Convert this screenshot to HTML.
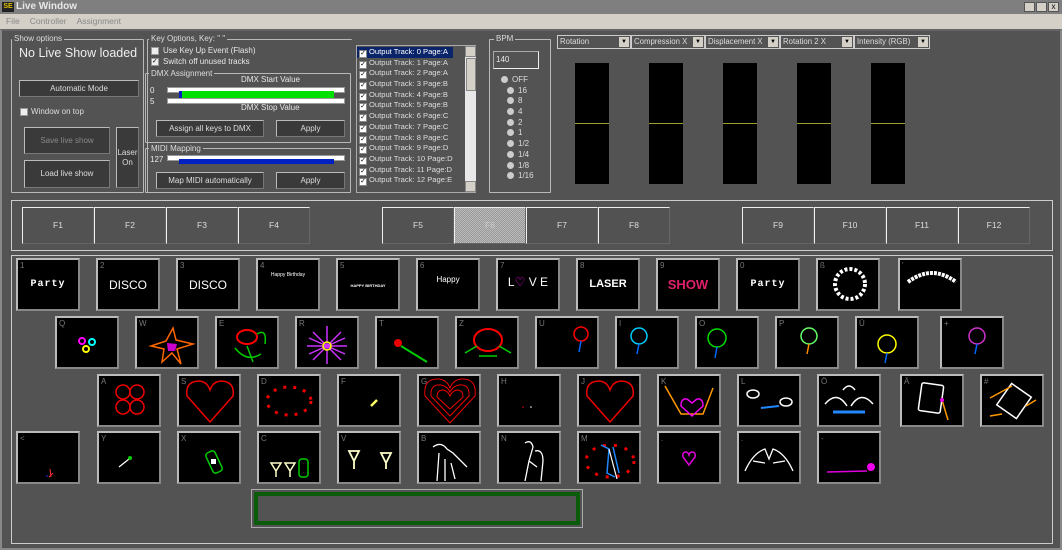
<!DOCTYPE html>
<html><head><meta charset="utf-8"><style>
*{box-sizing:border-box;margin:0;padding:0}
body{width:1062px;height:550px;background:#535353;font-family:"Liberation Sans",sans-serif;font-size:8px;color:#e8e8e8;position:relative;overflow:hidden}
.a{position:absolute}
.title{left:0;top:0;width:1062px;height:14px;background:#7f7f7f;color:#e8e8e8;font-weight:bold;font-size:10px;line-height:14px;padding-left:16px}
.menu{left:0;top:14px;width:1062px;height:15px;background:#d4d0c8;color:#888;font-size:8.5px;line-height:15px}
.grp{border:1px solid #b8b8b8;border-radius:1px}
.lbl{background:#535353;padding:0 2px;color:#ddd;font-size:8px;line-height:10px}
.btn{background:#3a3a3a;border:1px solid #777;border-top-color:#bbb;border-left-color:#bbb;color:#ddd;text-align:center;font-size:8px}
.chk{width:8px;height:8px;background:#eee;border:1px solid #999}
.meter{background:#000;width:34px;height:121px;top:63px}
.meter:after{content:"";position:absolute;left:0;top:60px;width:34px;height:1px;background:#a0a030}
.dd{top:35px;height:14px;border:1px solid #ccc;color:#ddd;line-height:12px;padding-left:2px;font-size:7.8px;white-space:nowrap;overflow:hidden}
.dd b{position:absolute;right:1px;top:1px;width:10px;height:10px;background:#d4d0c8;color:#000;font-size:6px;line-height:10px;text-align:center;font-weight:normal}
.fk{top:207px;height:37px;width:72px;background:#525252;border:1px solid #666;border-top-color:#eee;border-left-color:#eee;text-align:center;line-height:35px;color:#ddd;font-size:8.5px}
.th{width:64px;height:53px;background:#000;border:2px solid #bbb;border-right-color:#888;border-bottom-color:#888;overflow:hidden}
.th i{position:absolute;left:2px;top:1px;font-style:normal;color:#777;font-size:8px}
.th svg{position:absolute;left:0;top:0}
.tx{position:absolute;left:0;width:100%;text-align:center;color:#fff;font-weight:bold}
.trk{height:10.7px;line-height:10.7px;white-space:nowrap;font-size:7.6px;color:#ddd;padding-left:2px}
.trk span{display:inline-block;width:8px;height:8px;background:#fff;border:1px solid #888;vertical-align:-1px;margin-right:2px;color:#000;font-size:7px;line-height:6px;text-align:center}
.rad{font-size:8px;color:#ddd;height:10.7px;line-height:10.7px}
.rad span{display:inline-block;width:7px;height:7px;border-radius:50%;background:#ccc;margin-right:4px;vertical-align:-1px}
</style></head><body>
<div class="a title"><span class="a" style="left:2px;top:2px;width:12px;height:10px;background:#222;color:#e0c000;font-size:7px;line-height:10px;text-align:center">SE</span>Live Window</div>
<div class="a" style="right:3px;top:2px;display:flex;gap:1px"><div style="width:11px;height:10px;background:#d4d0c8;border:1px solid #555"></div><div style="width:11px;height:10px;background:#d4d0c8;border:1px solid #555"></div><div style="width:11px;height:10px;background:#d4d0c8;border:1px solid #555;font-size:8px;line-height:8px;text-align:center;color:#000">x</div></div>
<div class="a menu"><span style="margin-left:6px">File</span><span style="margin-left:10px">Controller</span><span style="margin-left:10px">Assignment</span></div>
<div class="a" style="left:0;top:29px;width:1062px;height:521px;border:2px solid #888;border-top-color:#666"></div>

<!-- Show options -->
<div class="a grp" style="left:11px;top:39px;width:133px;height:154px"></div>
<div class="a lbl" style="left:12px;top:34px">Show options</div>
<div class="a" style="left:19px;top:46px;font-size:12.5px;color:#eee">No Live Show loaded</div>
<div class="a btn" style="left:19px;top:80px;width:120px;height:17px;line-height:15px">Automatic Mode</div>
<div class="a chk" style="left:20px;top:108px"></div><div class="a" style="left:31px;top:107px;color:#ddd">Window on top</div>
<div class="a btn" style="left:24px;top:127px;width:86px;height:27px;line-height:25px;color:#888">Save live show</div>
<div class="a btn" style="left:24px;top:160px;width:86px;height:28px;line-height:26px">Load live show</div>
<div class="a btn" style="left:116px;top:127px;width:23px;height:61px;padding-top:20px;line-height:10px">Laser On</div>

<!-- Key options -->
<div class="a grp" style="left:147px;top:39px;width:205px;height:154px;border-bottom:none;border-right:none"></div>
<div class="a lbl" style="left:149px;top:34px">Key Options, Key: " "</div>
<div class="a chk" style="left:151px;top:47px"></div><div class="a" style="left:163px;top:46px">Use Key Up Event (Flash)</div>
<div class="a chk" style="left:151px;top:58px;font-size:7px;color:#000;line-height:6px">✓</div><div class="a" style="left:163px;top:57px">Switch off unused tracks</div>
<div class="a grp" style="left:145px;top:73px;width:206px;height:70px"></div>
<div class="a lbl" style="left:149px;top:69px">DMX Assignment</div>
<div class="a" style="left:241px;top:75px">DMX Start Value</div>
<div class="a" style="left:150px;top:86px">0</div><div class="a" style="left:150px;top:97px">5</div>
<div class="a" style="left:167px;top:87px;width:178px;height:6px;background:#fff;border:1px solid #999"></div>
<div class="a" style="left:180px;top:91px;width:154px;height:7px;background:#00e000"></div>
<div class="a" style="left:179px;top:91px;width:3px;height:7px;background:#0020c0"></div>
<div class="a" style="left:167px;top:98px;width:178px;height:6px;background:#fff;border:1px solid #999"></div>
<div class="a" style="left:241px;top:103px">DMX Stop Value</div>
<div class="a btn" style="left:156px;top:120px;width:108px;height:17px;line-height:15px">Assign all keys to DMX</div>
<div class="a btn" style="left:276px;top:120px;width:69px;height:17px;line-height:15px">Apply</div>
<div class="a grp" style="left:145px;top:148px;width:206px;height:45px"></div>
<div class="a lbl" style="left:149px;top:144px">MIDI Mapping</div>
<div class="a" style="left:150px;top:155px">127</div>
<div class="a" style="left:167px;top:155px;width:178px;height:6px;background:#fff;border:1px solid #999"></div>
<div class="a" style="left:179px;top:159px;width:155px;height:5px;background:#0020c0"></div>
<div class="a btn" style="left:156px;top:172px;width:108px;height:17px;line-height:15px">Map MIDI automatically</div>
<div class="a btn" style="left:276px;top:172px;width:69px;height:17px;line-height:15px">Apply</div>

<!-- Track list -->
<div class="a" style="left:356px;top:45px;width:120px;height:148px;border:1px solid #aaa;background:#535353;padding-top:1px;overflow:hidden">
<div class="trk" style="background:#0a246a;color:#fff;width:96px"><span>✓</span>Output Track: 0 Page:A</div>
<div class="trk"><span>✓</span>Output Track: 1 Page:A</div>
<div class="trk"><span>✓</span>Output Track: 2 Page:A</div>
<div class="trk"><span>✓</span>Output Track: 3 Page:B</div>
<div class="trk"><span>✓</span>Output Track: 4 Page:B</div>
<div class="trk"><span>✓</span>Output Track: 5 Page:B</div>
<div class="trk"><span>✓</span>Output Track: 6 Page:C</div>
<div class="trk"><span>✓</span>Output Track: 7 Page:C</div>
<div class="trk"><span>✓</span>Output Track: 8 Page:C</div>
<div class="trk"><span>✓</span>Output Track: 9 Page:D</div>
<div class="trk"><span>✓</span>Output Track: 10 Page:D</div>
<div class="trk"><span>✓</span>Output Track: 11 Page:D</div>
<div class="trk"><span>✓</span>Output Track: 12 Page:E</div>
</div>
<div class="a" style="left:465px;top:46px;width:11px;height:146px;background:#e8e8e8"></div>
<div class="a" style="left:465px;top:46px;width:11px;height:11px;background:#d4d0c8;border:1px solid #888"></div>
<div class="a" style="left:466px;top:58px;width:10px;height:33px;background:#d4d0c8;border:1px solid #888"></div>
<div class="a" style="left:465px;top:181px;width:11px;height:11px;background:#d4d0c8;border:1px solid #888"></div>

<!-- BPM -->
<div class="a grp" style="left:489px;top:39px;width:62px;height:154px;border-top:1px solid #bbb"></div>
<div class="a lbl" style="left:494px;top:34px">BPM</div>
<div class="a" style="left:493px;top:51px;width:46px;height:18px;border:1px solid #aaa;border-right-color:#eee;border-bottom-color:#eee;padding:3px 2px">140</div>
<div class="a" style="left:501px;top:75px">
<div class="rad"><span></span>OFF</div>
<div class="rad" style="padding-left:6px"><span></span>16</div>
<div class="rad" style="padding-left:6px"><span></span>8</div>
<div class="rad" style="padding-left:6px"><span></span>4</div>
<div class="rad" style="padding-left:6px"><span></span>2</div>
<div class="rad" style="padding-left:6px"><span></span>1</div>
<div class="rad" style="padding-left:6px"><span></span>1/2</div>
<div class="rad" style="padding-left:6px"><span></span>1/4</div>
<div class="rad" style="padding-left:6px"><span></span>1/8</div>
<div class="rad" style="padding-left:6px"><span></span>1/16</div>
</div>

<!-- dropdowns/meters -->
<div class="a dd" style="left:557px;width:74px">Rotation<b>▼</b></div>
<div class="a dd" style="left:631px;width:74px">Compression X<b>▼</b></div>
<div class="a dd" style="left:705px;width:75px">Displacement X<b>▼</b></div>
<div class="a dd" style="left:780px;width:74px">Rotation 2 X<b>▼</b></div>
<div class="a dd" style="left:854px;width:76px">Intensity (RGB)<b>▼</b></div>
<div class="a meter" style="left:575px"></div>
<div class="a meter" style="left:649px"></div>
<div class="a meter" style="left:723px"></div>
<div class="a meter" style="left:797px"></div>
<div class="a meter" style="left:871px"></div>

<!-- F keys -->
<div class="a" style="left:11px;top:200px;width:1042px;height:51px;border:1px solid #ccc"></div>
<div class="a fk" style="left:22px">F1</div><div class="a fk" style="left:94px">F2</div><div class="a fk" style="left:166px">F3</div><div class="a fk" style="left:238px">F4</div>
<div class="a fk" style="left:382px">F5</div>
<div class="a fk" style="left:454px;background:repeating-conic-gradient(#bbb 0 25%,#999 0 50%) 0 0/2px 2px;color:#ccc">F6</div>
<div class="a fk" style="left:526px">F7</div><div class="a fk" style="left:598px">F8</div>
<div class="a fk" style="left:742px">F9</div><div class="a fk" style="left:814px">F10</div><div class="a fk" style="left:886px">F11</div><div class="a fk" style="left:958px">F12</div>

<!-- thumbnails panel -->
<div class="a" style="left:11px;top:255px;width:1042px;height:289px;border:1px solid #ccc"></div>

<!-- row 1 -->
<div class="a th" style="left:16px;top:258px"><i>1</i><div class="tx" style="top:19px;font-size:10px;letter-spacing:1px;font-family:'Liberation Mono',monospace">Party</div></div>
<div class="a th" style="left:96px;top:258px"><i>2</i><div class="tx" style="top:18px;font-size:12px;font-weight:normal">DISCO</div></div>
<div class="a th" style="left:176px;top:258px"><i>3</i><div class="tx" style="top:18px;font-size:12px;font-weight:normal">DISCO</div></div>
<div class="a th" style="left:256px;top:258px"><i>4</i><div class="tx" style="top:12px;font-size:5px;font-weight:normal">Happy Birthday</div></div>
<div class="a th" style="left:336px;top:258px"><i>5</i><div class="tx" style="top:23px;font-size:4px">HAPPY BIRTHDAY</div></div>
<div class="a th" style="left:416px;top:258px"><i>6</i><div class="tx" style="top:15px;font-size:8px;font-weight:normal">Happy</div></div>
<div class="a th" style="left:496px;top:258px"><i>7</i><div class="tx" style="top:15px;font-size:12px;font-weight:normal">L<span style="color:#f0f">♡</span> V E</div></div>
<div class="a th" style="left:576px;top:258px"><i>8</i><div class="tx" style="top:18px;font-size:11px">LASER</div></div>
<div class="a th" style="left:656px;top:258px"><i>9</i><div class="tx" style="top:17px;font-size:13px;color:#e0206a">SHOW</div></div>
<div class="a th" style="left:736px;top:258px"><i>0</i><div class="tx" style="top:19px;font-size:10px;letter-spacing:1px;font-family:'Liberation Mono',monospace">Party</div></div>
<div class="a th" style="left:816px;top:258px"><i>ß</i><svg width="60" height="49"><circle cx="32" cy="24" r="15" fill="none" stroke="#fff" stroke-width="4" stroke-dasharray="3 2"/></svg></div>
<div class="a th" style="left:898px;top:258px"><i>'</i><svg width="60" height="49"><path d="M8 22 Q32 4 56 22" fill="none" stroke="#fff" stroke-width="4" stroke-dasharray="3 1"/></svg></div>

<!-- row 2 -->
<div class="a th" style="left:55px;top:316px"><i>Q</i><svg width="60" height="49"><circle cx="25" cy="23" r="3" fill="none" stroke="#f0f" stroke-width="2"/><circle cx="35" cy="24" r="3" fill="none" stroke="#0ff" stroke-width="2"/><circle cx="29" cy="31" r="3" fill="none" stroke="#ff0" stroke-width="2"/></svg></div>
<div class="a th" style="left:135px;top:316px"><i>W</i><svg width="60" height="49"><path d="M36 10 L39 22 L56 26 L40 31 L44 46 L35 35 L25 44 L27 31 L14 28 L29 23 Z" fill="none" stroke="#f60" stroke-width="1.5"/><path d="M30 25 L40 26 L38 33 L31 33Z" fill="#c0c"/></svg></div>
<div class="a th" style="left:215px;top:316px"><i>E</i><svg width="60" height="49"><ellipse cx="30" cy="19" rx="10" ry="7" fill="none" stroke="#f00" stroke-width="2"/><path d="M18 30 Q30 45 44 36 M40 16 Q50 10 48 26 M30 28 L36 44" fill="none" stroke="#0c0" stroke-width="1.5"/></svg></div>
<div class="a th" style="left:295px;top:316px"><i>R</i><svg width="60" height="49"><g stroke="#c3f" stroke-width="1.5"><path d="M10 28 L50 28 M30 8 L30 46 M16 14 L44 42 M44 14 L16 42 M12 20 L48 36 M12 36 L48 20"/></g><circle cx="30" cy="28" r="4" fill="none" stroke="#ff0" stroke-width="1.5"/></svg></div>
<div class="a th" style="left:375px;top:316px"><i>T</i><svg width="60" height="49"><circle cx="21" cy="25" r="4" fill="#e00"/><path d="M24 28 L50 44" stroke="#0c0" stroke-width="2"/></svg></div>
<div class="a th" style="left:455px;top:316px"><i>Z</i><svg width="60" height="49"><ellipse cx="31" cy="22" rx="14" ry="11" fill="none" stroke="#f00" stroke-width="2"/><path d="M8 35 L20 28 M54 35 L42 28 M22 38 L40 38" stroke="#0c0" stroke-width="1.5"/></svg></div>
<div class="a th" style="left:535px;top:316px"><i>U</i><svg width="60" height="49"><circle cx="44" cy="16" r="7" fill="none" stroke="#f00" stroke-width="1.5"/><path d="M44 23 L42 34" stroke="#06f" stroke-width="1.5"/></svg></div>
<div class="a th" style="left:615px;top:316px"><i>I</i><svg width="60" height="49"><circle cx="22" cy="18" r="8" fill="none" stroke="#0cf" stroke-width="1.5"/><path d="M22 26 L20 36" stroke="#06f" stroke-width="1.5"/></svg></div>
<div class="a th" style="left:695px;top:316px"><i>O</i><svg width="60" height="49"><circle cx="20" cy="20" r="9" fill="none" stroke="#0d0" stroke-width="1.5"/><path d="M20 29 L18 40" stroke="#06f" stroke-width="1.5"/></svg></div>
<div class="a th" style="left:775px;top:316px"><i>P</i><svg width="60" height="49"><circle cx="32" cy="18" r="8" fill="none" stroke="#6f6" stroke-width="1.5"/><path d="M32 26 L30 36" stroke="#f80" stroke-width="1.5"/></svg></div>
<div class="a th" style="left:855px;top:316px"><i>Ü</i><svg width="60" height="49"><circle cx="30" cy="26" r="9" fill="none" stroke="#ff0" stroke-width="1.5"/><path d="M30 35 L28 45" stroke="#06f" stroke-width="1.5"/></svg></div>
<div class="a th" style="left:940px;top:316px"><i>+</i><svg width="60" height="49"><circle cx="35" cy="18" r="8" fill="none" stroke="#c3c" stroke-width="1.5"/><path d="M35 26 L33 36" stroke="#06f" stroke-width="1.5"/></svg></div>

<!-- row 3 -->
<div class="a th" style="left:97px;top:374px"><i>A</i><svg width="60" height="49"><g fill="none" stroke="#e00" stroke-width="1.5"><circle cx="24" cy="16" r="7"/><circle cx="38" cy="16" r="7"/><circle cx="24" cy="31" r="7"/><circle cx="38" cy="31" r="7"/></g></svg></div>
<div class="a th" style="left:177px;top:374px"><i>S</i><svg width="60" height="49"><path d="M31 46 L8 20 Q6 6 19 5 Q28 5 31 14 Q34 5 43 5 Q56 6 54 20 Z" fill="none" stroke="#e00" stroke-width="1.5"/></svg></div>
<div class="a th" style="left:257px;top:374px"><i>D</i><svg width="60" height="49"><ellipse cx="30" cy="25" rx="22" ry="14" fill="none" stroke="#e00" stroke-width="3" stroke-dasharray="3 7"/></svg></div>
<div class="a th" style="left:337px;top:374px"><i>F</i><svg width="60" height="49"><path d="M32 30 L38 24" stroke="#ff6" stroke-width="2.5"/></svg></div>
<div class="a th" style="left:417px;top:374px"><i>G</i><svg width="60" height="49"><g fill="none" stroke="#e00" stroke-width="1"><path d="M31 47 L6 20 Q4 2 20 3 Q28 4 31 12 Q34 4 42 3 Q58 2 56 20 Z"/><path d="M31 40 L12 20 Q11 8 22 9 Q28 10 31 16 Q34 10 40 9 Q51 8 50 20 Z"/><path d="M31 33 L18 21 Q18 14 24 14 Q29 15 31 20 Q33 15 38 14 Q44 14 44 21 Z"/></g></svg></div>
<div class="a th" style="left:497px;top:374px"><i>H</i><svg width="60" height="49"><circle cx="24" cy="31" r="0.8" fill="#e00"/><circle cx="32" cy="31" r="0.8" fill="#fff"/></svg></div>
<div class="a th" style="left:577px;top:374px"><i>J</i><svg width="60" height="49"><path d="M31 46 L8 20 Q6 6 19 5 Q28 5 31 14 Q34 5 43 5 Q56 6 54 20 Z" fill="none" stroke="#e00" stroke-width="1.5"/></svg></div>
<div class="a th" style="left:657px;top:374px"><i>K</i><svg width="60" height="49"><path d="M6 10 L22 38 L44 38 L54 12" fill="none" stroke="#f90" stroke-width="1.5"/><path d="M33 40 L22 30 Q22 22 28 23 L33 27 L38 23 Q44 22 44 30 Z" fill="none" stroke="#e0e" stroke-width="1.5"/></svg></div>
<div class="a th" style="left:737px;top:374px"><i>L</i><svg width="60" height="49"><ellipse cx="14" cy="18" rx="6" ry="4" fill="none" stroke="#fff" stroke-width="1.5"/><ellipse cx="47" cy="26" rx="6" ry="4" fill="none" stroke="#fff" stroke-width="1.5"/><path d="M22 32 L40 30" stroke="#28f" stroke-width="2"/></svg></div>
<div class="a th" style="left:817px;top:374px"><i>Ö</i><svg width="60" height="49"><path d="M6 28 Q18 14 28 30 M54 28 Q42 14 32 30 M24 14 Q30 6 36 14" fill="none" stroke="#fff" stroke-width="1.5"/><path d="M14 36 L46 36" stroke="#28f" stroke-width="3"/></svg></div>
<div class="a th" style="left:900px;top:374px"><i>Ä</i><svg width="60" height="49"><rect x="18" y="8" width="22" height="28" rx="2" fill="none" stroke="#fff" stroke-width="1.5" transform="rotate(8 29 22)"/><path d="M40 24 L46 44" stroke="#f90" stroke-width="1.5"/><circle cx="40" cy="24" r="2" fill="#e0e"/></svg></div>
<div class="a th" style="left:980px;top:374px"><i>#</i><svg width="60" height="49"><rect x="20" y="12" width="24" height="26" fill="none" stroke="#fff" stroke-width="1.5" transform="rotate(35 32 25)"/><path d="M8 22 L30 10 M8 40 L20 38 M44 30 L54 24" stroke="#f90" stroke-width="1.5"/></svg></div>

<!-- row 4 -->
<div class="a th" style="left:16px;top:431px"><i>&lt;</i><svg width="60" height="49"><path d="M32 36 L33 44 M35 40 L31 44" stroke="#f33" stroke-width="1"/><circle cx="29" cy="43" r="0.8" fill="#33f"/></svg></div>
<div class="a th" style="left:97px;top:431px"><i>Y</i><svg width="60" height="49"><path d="M20 34 L30 26" stroke="#fff" stroke-width="1.2"/><circle cx="31" cy="25" r="2" fill="#0c0"/></svg></div>
<div class="a th" style="left:177px;top:431px"><i>X</i><svg width="60" height="49"><rect x="30" y="18" width="10" height="22" rx="3" fill="none" stroke="#0c0" stroke-width="1.5" transform="rotate(-25 35 29)"/><rect x="32" y="26" width="5" height="5" fill="#fff"/></svg></div>
<div class="a th" style="left:257px;top:431px"><i>C</i><svg width="60" height="49"><path d="M12 30 L22 30 L17 38 Z M26 30 L36 30 L31 38 Z M17 38 L17 44 M31 38 L31 44" fill="none" stroke="#ffc" stroke-width="1.5"/><rect x="40" y="26" width="9" height="18" rx="3" fill="none" stroke="#0c0" stroke-width="1.5"/></svg></div>
<div class="a th" style="left:337px;top:431px"><i>V</i><svg width="60" height="49"><path d="M10 18 L20 18 L15 28 Z M15 28 L15 36 M42 20 L52 20 L47 30 Z M47 30 L47 36" fill="none" stroke="#ffc" stroke-width="1.8"/></svg></div>
<div class="a th" style="left:417px;top:431px"><i>B</i><svg width="60" height="49"><path d="M14 14 Q22 8 28 16 L34 20 L48 34 M20 20 L18 48 M26 26 L26 48 M32 30 L36 46" fill="none" stroke="#fff" stroke-width="1.3"/></svg></div>
<div class="a th" style="left:497px;top:431px"><i>N</i><svg width="60" height="49"><path d="M26 10 Q32 6 34 14 L30 28 L26 48 M36 18 Q44 16 44 28 L42 48 M30 28 L38 34" fill="none" stroke="#fff" stroke-width="1.3"/></svg></div>
<div class="a th" style="left:577px;top:431px"><i>M</i><svg width="60" height="49"><ellipse cx="31" cy="28" rx="24" ry="16" fill="none" stroke="#e00" stroke-width="3" stroke-dasharray="3 8"/><path d="M22 12 L30 16 L28 40 L36 44 M34 14 L40 40" fill="none" stroke="#28f" stroke-width="1.5"/><path d="M30 16 L38 46" stroke="#fff" stroke-width="1.2"/></svg></div>
<div class="a th" style="left:657px;top:431px"><i>.</i><svg width="60" height="49"><path d="M30 32 L24 24 Q23 19 27 19 Q29 19 30 22 Q31 19 33 19 Q37 19 36 24 Z" fill="none" stroke="#d0d" stroke-width="1.5"/></svg></div>
<div class="a th" style="left:737px;top:431px"><i>.</i><svg width="60" height="49"><path d="M6 38 Q14 20 26 16 L30 26 L34 16 Q46 20 54 38 M14 28 L26 30 M46 28 L34 30" fill="none" stroke="#fff" stroke-width="1.3"/></svg></div>
<div class="a th" style="left:817px;top:431px"><i>-</i><svg width="60" height="49"><path d="M8 39 L48 38" stroke="#d0d" stroke-width="1.5"/><circle cx="52" cy="34" r="4" fill="#e0e"/></svg></div>

<!-- green box -->
<div class="a" style="left:251px;top:489px;width:332px;height:39px;border:1px solid #aaa;padding:2px"><div style="width:100%;height:100%;border:4px solid #0a5c0a"></div></div>
</body></html>
